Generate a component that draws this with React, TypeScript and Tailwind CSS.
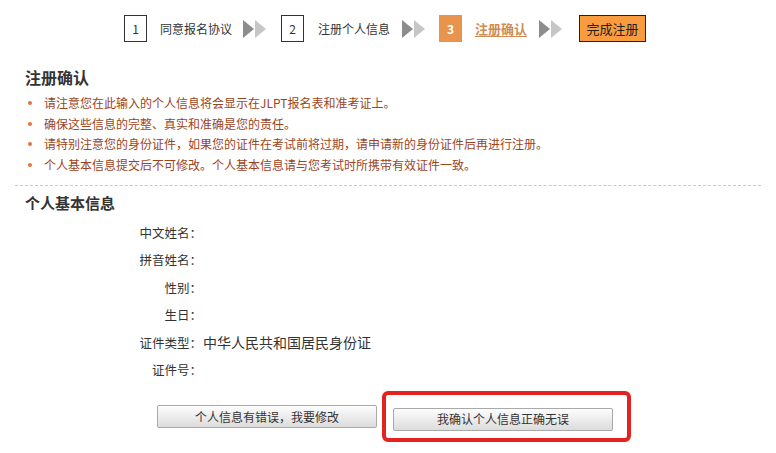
const font = { fontFamily: '"Noto Sans CJK SC", "Liberation Sans", sans-serif' };

function Arrows() {
  return (
    <svg width="24" height="18" viewBox="0 0 24 18" className="shrink-0">
      <polygon points="0,0 11,9 0,18" fill="#8c8c8c" />
      <polygon points="12,0 23,9 12,18" fill="#c6c6c6" />
    </svg>
  );
}

function NumBox({ n }: { n: string }) {
  return (
    <div className="flex h-[27px] w-[23px] shrink-0 items-center justify-center border border-[#333] bg-white text-[12px] text-[#333]">
      {n}
    </div>
  );
}

const notes = [
  '请注意您在此输入的个人信息将会显示在JLPT报名表和准考证上。',
  '确保这些信息的完整、真实和准确是您的责任。',
  '请特别注意您的身份证件，如果您的证件在考试前将过期，请申请新的身份证件后再进行注册。',
  '个人基本信息提交后不可修改。个人基本信息请与您考试时所携带有效证件一致。',
];

const rows = [
  { label: '中文姓名：', value: '' },
  { label: '拼音姓名：', value: '' },
  { label: '性别：', value: '' },
  { label: '生日：', value: '' },
  { label: '证件类型：', value: '中华人民共和国居民身份证' },
  { label: '证件号：', value: '' },
];

export default function App() {
  return (
    <div className="h-[453px] w-[776px] overflow-hidden bg-white text-[#333]" style={font}>
      {/* steps */}
      <div className="flex items-center pl-[124px] pt-[15px] text-[12px]">
        <NumBox n="1" />
        <span className="ml-[13px]">同意报名协议</span>
        <div className="ml-[11px]"><Arrows /></div>
        <div className="ml-[14px]"><NumBox n="2" /></div>
        <span className="ml-[14px]">注册个人信息</span>
        <div className="ml-[12px]"><Arrows /></div>
        <div className="ml-[13px] flex h-[27px] w-[23px] items-center justify-center bg-[#e8944c] text-[12px] font-bold text-white">
          3
        </div>
        <span className="ml-[13px] text-[13px] font-bold text-[#cd8d55] underline underline-offset-2">注册确认</span>
        <div className="ml-[12px]"><Arrows /></div>
        <div className="ml-[16px] flex h-[27px] w-[67px] items-center justify-center border border-[#222] bg-[#f99c3f] text-[13px] text-[#222]">
          完成注册
        </div>
      </div>

      {/* notes */}
      <div className="mt-[25px] pl-[25px] text-[16px] font-bold leading-[20px]">注册确认</div>
      <ul className="mt-[6px] pl-[28px] text-[12px] leading-[20.5px] text-[#9c441c]">
        {notes.map((t) => (
          <li key={t} className="flex items-center">
            <span className="mr-[12px] h-[4px] w-[4px] rounded-full bg-[#e8733a]" />
            {t}
          </li>
        ))}
      </ul>
      <div className="mx-[15px] mt-[10px] border-t border-dashed border-[#c8c8c8]" />

      {/* personal info */}
      <div className="mt-[7px] pl-[25px] text-[15px] font-bold leading-[20px]">个人基本信息</div>
      <div className="mt-[6px]">
        {rows.map((r) => (
          <div key={r.label} className="flex items-center leading-[27.4px]">
            <span className="w-[202px] text-right text-[12.5px]">{r.label}</span>
            <span className="ml-[1px] text-[14px]">{r.value}</span>
          </div>
        ))}
      </div>

      {/* buttons */}
      <div className="mt-[22px] flex pl-[157px]">
        <button className="h-[23px] w-[220px] rounded-[2px] border border-[#a9a9a9] bg-gradient-to-b from-[#fdfdfd] to-[#dcdcdc] text-[12px] text-[#333]">
          个人信息有错误，我要修改
        </button>
        <div className="relative ml-[16px]">
          <button className="h-[23px] w-[220px] rounded-[2px] border border-[#a9a9a9] bg-gradient-to-b from-[#fdfdfd] to-[#dcdcdc] text-[12px] text-[#333]">
            我确认个人信息正确无误
          </button>
          <div className="pointer-events-none absolute -bottom-[11px] -left-[11px] -right-[18px] -top-[14px] rounded-[6px] border-[4px] border-[#e3231f]" />
        </div>
      </div>
    </div>
  );
}
